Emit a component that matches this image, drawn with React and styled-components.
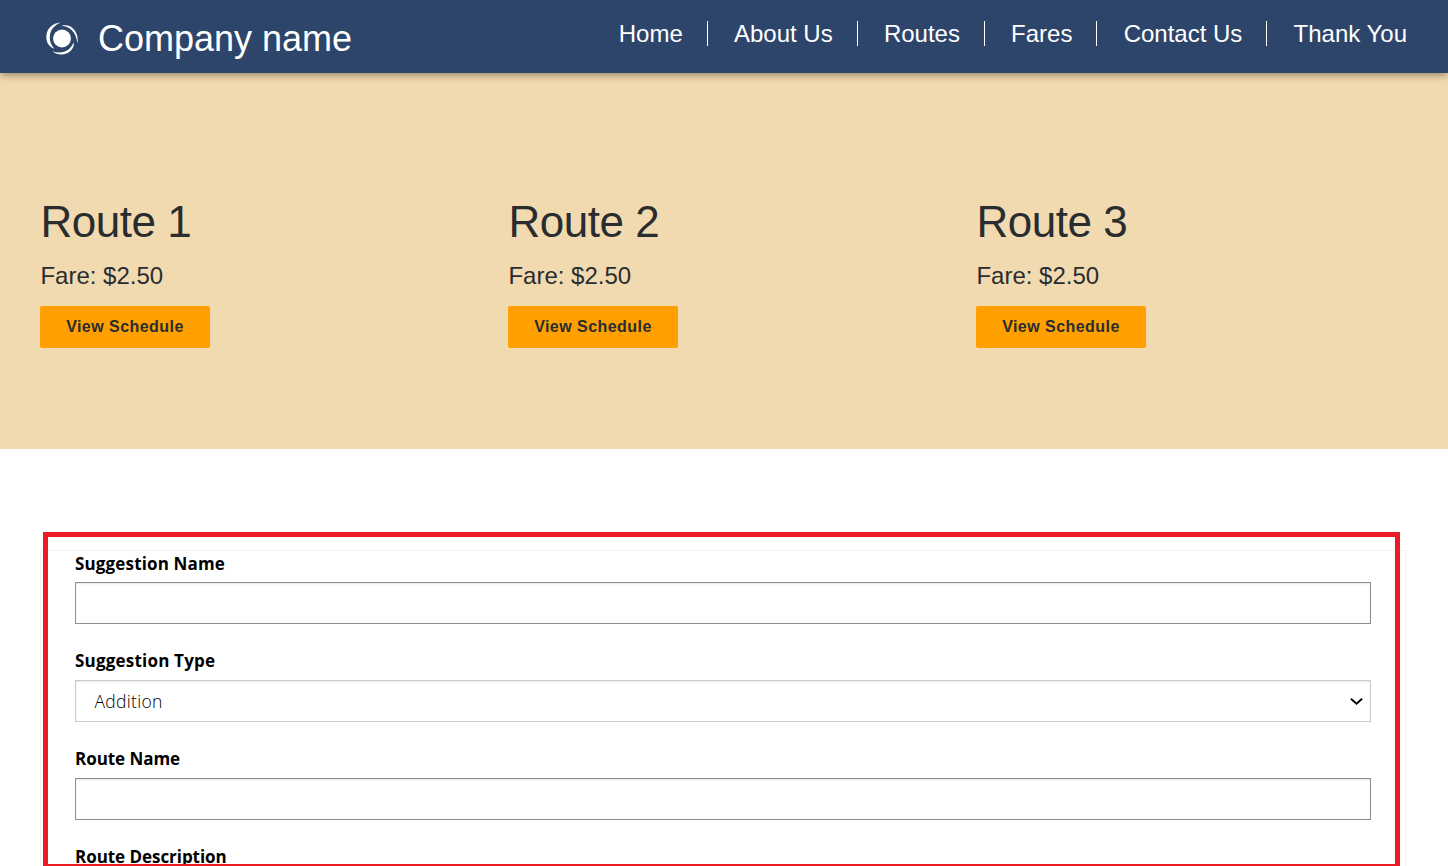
import React from 'react';
import styled, { createGlobalStyle } from 'styled-components';

const GlobalStyle = createGlobalStyle`
  *, *::before, *::after { box-sizing: border-box; }
  html, body { margin: 0; height: 100%; overflow: hidden; background: #fff; }
  body { font-family: "Liberation Sans", Arial, sans-serif; }
  h2, p { margin: 0; font-weight: 400; }
`;

const Page = styled.div`
  height: 866px;
  overflow: hidden;
  display: flex;
  flex-direction: column;
`;

const Header = styled.header`
  flex: none;
  height: 73px;
  padding: 0 41px 0 46px;
  display: flex;
  justify-content: space-between;
  background: #2d456b;
  color: #fff;
  box-shadow: 0 2px 8px rgba(0, 0, 0, 0.4);
  z-index: 1;
`;

const Brand = styled.div`
  display: flex;
  align-items: center;
  gap: 20px;
  height: 77px;
  white-space: nowrap;
`;

const BrandName = styled.span`
  font-size: 36px;
  line-height: 40px;
`;

const Nav = styled.nav`
  display: flex;
  height: 25px;
  margin-top: 21px;
`;

const NavLink = styled.a`
  font-size: 24px;
  line-height: 25px;
  white-space: nowrap;
  color: #fff;

  & + & {
    margin-left: 23.9px;
    padding-left: 26.3px;
    border-left: 1px solid #fff;
  }
`;

const Routes = styled.section`
  flex: none;
  height: 376px;
  padding: 122px 40px 0;
  display: grid;
  grid-template-columns: repeat(3, 428px);
  column-gap: 40px;
  align-items: start;
  background: #f2dab0;
  color: #292d2f;
`;

const RouteCard = styled.article`
  display: flex;
  flex-direction: column;
  align-items: flex-start;
`;

const RouteTitle = styled.h2`
  padding-left: 0.5px;
  font-size: 44px;
  line-height: 54px;
  letter-spacing: -0.5px;
`;

const Fare = styled.p`
  margin: 13px 0 16px;
  padding-left: 0.4px;
  font-size: 24px;
  line-height: 28px;
`;

const ScheduleButton = styled.button`
  width: 170px;
  height: 42px;
  padding: 0;
  border: 0;
  border-radius: 2px;
  background: #ffa000;
  color: #292d2f;
  font: bold 16px "Liberation Sans", Arial, sans-serif;
  letter-spacing: 0.46px;
`;

const FormSection = styled.section`
  flex: none;
  margin: 101px 42px 0 40px;
  position: relative;
  height: 330px;
  border: 1px solid #f2f2f2;
  border-bottom: 0;
  padding: 0 34px;
`;

const Highlight = styled.div`
  position: absolute;
  top: -19px;
  left: 2px;
  right: 5px;
  height: 337px;
  border: 5px solid #ed1c24;
  pointer-events: none;
`;

const Field = styled.label`
  display: block;
  height: ${({ $height }) => $height || 98}px;
  font-family: "Open Sans", "Noto Sans", sans-serif;
  color: #000;
`;

const LabelText = styled.span`
  display: block;
  height: 31px;
  font-size: 17px;
  line-height: ${({ $lineHeight }) => $lineHeight || 24}px;
  letter-spacing: ${({ $spacing }) => $spacing || 0}px;
  font-weight: 700;
  white-space: nowrap;
`;

const Input = styled.input`
  display: block;
  width: 1296px;
  height: 42px;
  border: 1px solid #8f8f8f;
  box-shadow: inset 0 1px 2px rgba(10, 10, 10, 0.1);
  outline: 0;
`;

const SelectBox = styled.div`
  width: 1296px;
  height: 42px;
  padding: 0 7px 0 18.5px;
  display: flex;
  align-items: center;
  justify-content: space-between;
  border: 1px solid #cacaca;
  box-shadow: inset 0 1px 2px rgba(10, 10, 10, 0.1);
  font-size: 17.5px;
  font-weight: 300;
  letter-spacing: 0.3px;
`;

const LINKS = ['Home', 'About Us', 'Routes', 'Fares', 'Contact Us', 'Thank You'];
const ROUTES = ['Route 1', 'Route 2', 'Route 3'];

const Logo = () => (
  <svg width="32" height="33" viewBox="0 0 32 33" fill="#fff" aria-hidden="true">
    <circle cx="16" cy="16.500" r="9" />
    <path d="M15 .4C6 .8 .3 7 .3 15C.3 21 3.500 25 8.300 26.800C4.600 22.500 3.300 18 3.900 13.200C4.800 7.300 8.200 3 15 .4Z" />
    <path d="M15.500 3.700C20 2.500 24 3.500 27 6.500C31 10.500 32.300 15 31.400 21.500C30.700 15.500 29 11 25.600 7.900C22.800 5.300 19.500 4 15.500 3.700Z" />
    <path d="M6.200 29.200C12 33.800 20 33.500 24.500 29C27.200 26.300 28.200 23.500 27.700 20.500C25.700 25 22.600 28.200 18.700 29.600C14.500 31 10.500 30.800 6.200 29.200Z" />
  </svg>
);

const Chevron = () => (
  <svg width="13" height="10" viewBox="0 0 13 10" fill="none" stroke="#000" strokeWidth="2" aria-hidden="true">
    <path d="M.9 2.700L6.500 7.700L12.100 2.700" />
  </svg>
);

export default function App() {
  return (
    <Page>
      <GlobalStyle />
      <Header>
        <Brand>
          <Logo />
          <BrandName>Company name</BrandName>
        </Brand>
        <Nav>
          {LINKS.map((link) => <NavLink key={link}>{link}</NavLink>)}
        </Nav>
      </Header>
      <Routes>
        {ROUTES.map((route) => (
          <RouteCard key={route}>
            <RouteTitle>{route}</RouteTitle>
            <Fare>Fare: $2.50</Fare>
            <ScheduleButton type="button">View Schedule</ScheduleButton>
          </RouteCard>
        ))}
      </Routes>
      <FormSection>
        <Field>
          <LabelText $lineHeight={26} $spacing={0.15}>Suggestion Name</LabelText>
          <Input />
        </Field>
        <Field>
          <LabelText $spacing={0.2}>Suggestion Type</LabelText>
          <SelectBox>
            <span>Addition</span>
            <Chevron />
          </SelectBox>
        </Field>
        <Field>
          <LabelText $spacing={-0.05}>Route Name</LabelText>
          <Input />
        </Field>
        <Field $height={26}>
          <LabelText $spacing={-0.05}>Route Description</LabelText>
        </Field>
        <Highlight />
      </FormSection>
    </Page>
  );
}
